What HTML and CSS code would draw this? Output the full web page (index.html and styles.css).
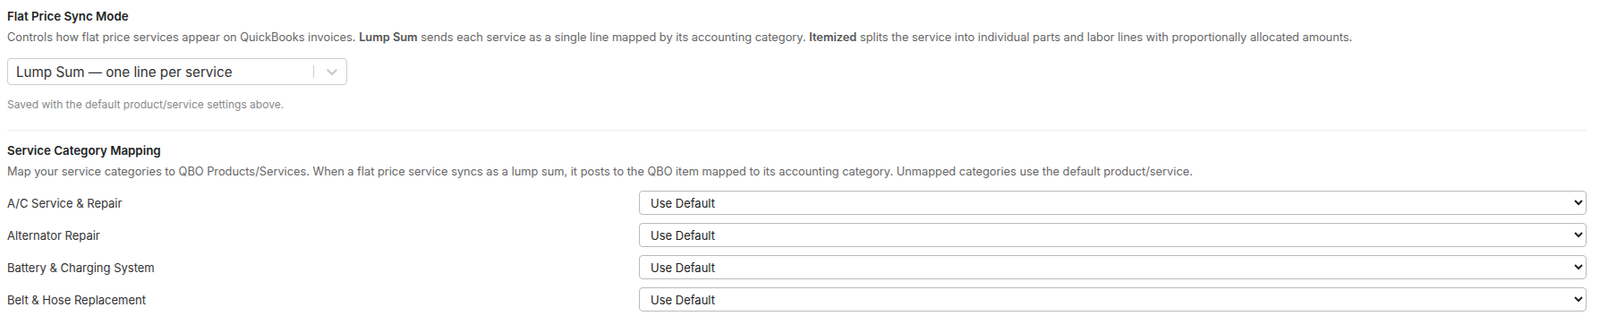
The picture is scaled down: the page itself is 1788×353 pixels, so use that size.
FILE: index.html
```html
<!DOCTYPE html>
<html lang="en">
<head>
	<meta charset="UTF-8">
	<meta name="viewport" content="width=device-width, initial-scale=1.0">
	<title>QuickBooks sync settings</title>
	<link rel="stylesheet" href="styles.css">
</head>
<body>
	<div class="settings">
		<section class="block">
			<h3 class="block-title">Flat Price Sync Mode</h3>
			<p class="block-desc">Controls how flat price services appear on QuickBooks invoices. <strong>Lump Sum</strong> sends each service as a single line mapped by its accounting category. <strong>Itemized</strong> splits the service into individual parts and labor lines with proportionally allocated amounts.</p>

			<div class="picker">
				<div class="picker-value">Lump Sum — one line per service</div>
				<div class="picker-indicators">
					<span class="picker-sep"></span>
					<span class="picker-arrow">
						<svg width="20" height="20" viewBox="0 0 20 20" aria-hidden="true"><path d="M4.516 7.548c0.436-0.446 1.043-0.481 1.576 0l3.908 3.747 3.908-3.747c0.533-0.481 1.141-0.446 1.574 0 0.436 0.445 0.408 1.197 0 1.615-0.406 0.418-4.695 4.502-4.695 4.502-0.217 0.223-0.502 0.335-0.787 0.335s-0.57-0.112-0.789-0.335c0 0-4.287-4.084-4.695-4.502s-0.436-1.170 0-1.615z" fill="currentColor"/></svg>
					</span>
				</div>
			</div>
			<p class="hint">Saved with the default product/service settings above.</p>
		</section>

		<hr class="divider">

		<section class="block">
			<h3 class="block-title">Service Category Mapping</h3>
			<p class="block-desc">Map your service categories to QBO Products/Services. When a flat price service syncs as a lump sum, it posts to the QBO item mapped to its accounting category. Unmapped categories use the default product/service.</p>

			<div class="mapping">
				<div class="mapping-row">
					<label class="mapping-label" for="cat-ac">A/C Service &amp; Repair</label>
					<select class="mapping-select" id="cat-ac"><option>Use Default</option></select>
				</div>
				<div class="mapping-row">
					<label class="mapping-label" for="cat-alt">Alternator Repair</label>
					<select class="mapping-select" id="cat-alt"><option>Use Default</option></select>
				</div>
				<div class="mapping-row">
					<label class="mapping-label" for="cat-bat">Battery &amp; Charging System</label>
					<select class="mapping-select" id="cat-bat"><option>Use Default</option></select>
				</div>
				<div class="mapping-row">
					<label class="mapping-label" for="cat-belt">Belt &amp; Hose Replacement</label>
					<select class="mapping-select" id="cat-belt"><option>Use Default</option></select>
				</div>
			</div>
		</section>
	</div>
</body>
</html>
```

FILE: styles.css
```css
body {
	margin: 0;
	padding: 0;
	background: #fff;
	font-family: Inter, "Noto Sans", sans-serif;
	color: #333;
}

.settings {
	width: 1765px;
	padding: 10px 0 0 8px;
}

.block-title {
	margin: 0;
	font-size: 13.3px;
	line-height: 16px;
	font-weight: 600;
	color: #1d1f23;
}

.block-desc {
	margin: 8px 0 0;
	font-size: 12.8px;
	line-height: 16px;
	color: #666;
}
.block-desc strong {
	font-weight: 600;
	color: #555;
}

/* react-select look */
.picker {
	box-sizing: border-box;
	width: 380px;
	height: 30px;
	margin-top: 15px;
	display: flex;
	align-items: center;
	border: 1px solid #ccc;
	border-radius: 4px;
	background: #fff;
}
.picker-value {
	flex: 1;
	padding-left: 9px;
	font-size: 15.2px;
	color: #333;
}
.picker-indicators {
	display: flex;
	align-items: center;
	height: 100%;
}
.picker-sep {
	width: 1px;
	height: 14px;
	background: #ccc;
}
.picker-arrow {
	display: flex;
	padding: 0 6px 0 10px;
	color: #ccc;
}

.hint {
	margin: 14px 0 0;
	font-size: 12px;
	line-height: 15px;
	color: #888;
}

.divider {
	margin: 21px 0 0;
	border: 0;
	border-top: 1px solid #eee;
}

.divider + .block {
	margin-top: 14px;
}

.mapping {
	margin-top: 13px;
	display: flex;
	flex-direction: column;
	gap: 9px;
}

.mapping-row {
	display: grid;
	grid-template-columns: 40% 60%;
	align-items: center;
}

.mapping-label {
	font-size: 13px;
	color: #333;
}

.mapping-select {
	height: 27px;
	padding: 0 8px;
	font-family: Inter, "Noto Sans", sans-serif;
	font-size: 13px;
	color: #222;
	background: #fff;
	border: 1px solid #bbb;
	border-radius: 4px;
}
```
